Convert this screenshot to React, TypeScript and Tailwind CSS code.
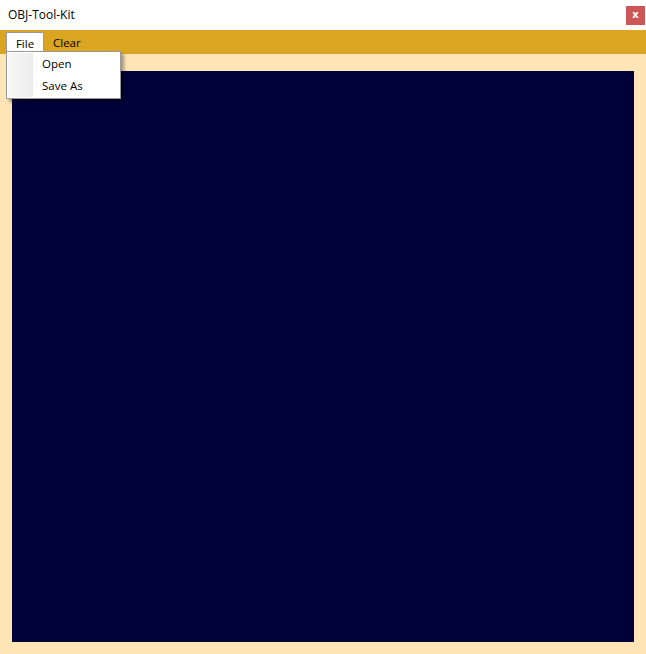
export default function App() {
  return (
    <div className="w-[646px] h-[654px] flex flex-col bg-white relative" style={{ fontFamily: '"Open Sans", "Noto Sans", sans-serif' }}>
      {/* Title bar */}
      <div className="h-[30px] flex items-center justify-between pl-[8px] pr-[1px]">
        <span className="text-[12px] text-black">OBJ-Tool-Kit</span>
        <div className="w-[19px] h-[19px] bg-[#cd5757] flex items-center justify-center text-white text-[11px] font-bold leading-none pb-[3px]">x</div>
      </div>

      {/* Menu bar */}
      <div className="h-[24px] bg-[#daa520] flex items-end pl-[6px] text-[11.5px] text-black">
        <div className="h-[22px] w-[38px] bg-white border border-b-0 border-[#999] flex items-center justify-center">File</div>
        <div className="h-[22px] px-[9px] flex items-center">Clear</div>
      </div>

      {/* Content */}
      <div className="flex-1 bg-[#ffe4b5] pt-[17px] px-[12px] pb-[12px] flex">
        <div className="flex-1 bg-[#00003a]" />
      </div>

      {/* Dropdown */}
      <div className="absolute left-[6px] top-[51px] w-[115px] h-[48px] bg-white border border-[#999] shadow-[3px_3px_3px_rgba(0,0,0,0.35)] flex text-[11.5px] text-black">
        <div className="w-[25px] my-[1px] ml-[1px] bg-gradient-to-r from-[#f8f8f8] to-[#ececec]" />
        <div className="flex-1 flex flex-col py-[1px] pl-[9px]">
          <div className="h-[22px] flex items-center">Open</div>
          <div className="h-[22px] flex items-center">Save As</div>
        </div>
      </div>
    </div>
  )
}
